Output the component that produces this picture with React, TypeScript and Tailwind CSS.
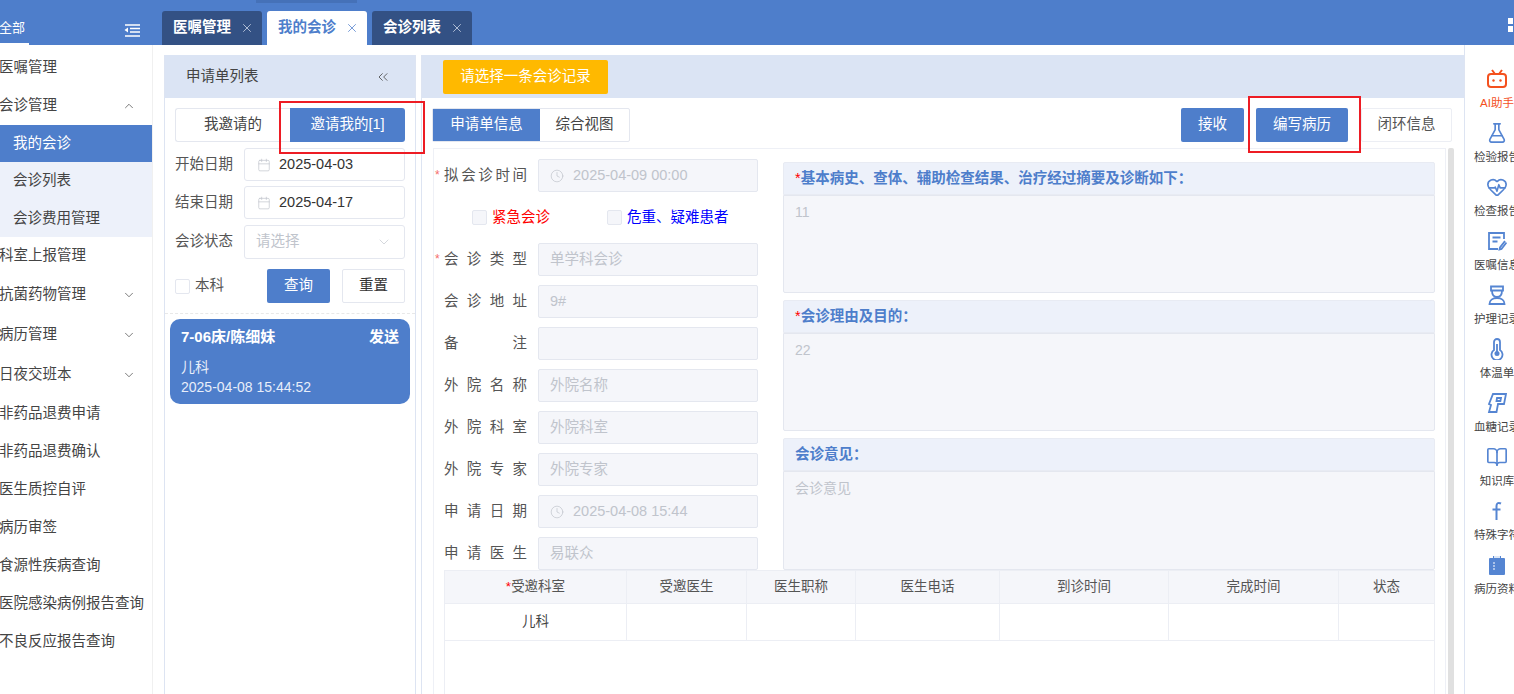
import { Calendar, ChevronDown, ChevronUp, ChevronsLeft, Clock, X, FlaskConical, HeartPulse, BookOpen } from 'lucide-react';
import type { ReactNode } from 'react';

const font = { fontFamily: '"Liberation Sans", "Noto Sans CJK SC", sans-serif' };

const navItems = [
  { label: '医嘱管理', h: 'h-[38px]' },
  { label: '会诊管理', h: 'h-[38px]', open: true },
];
const navRest = [
  { label: '科室上报管理', h: 'h-[38px]' },
  { label: '抗菌药物管理', h: 'h-[40px]', arrow: true },
  { label: '病历管理', h: 'h-[40px]', arrow: true },
  { label: '日夜交班本', h: 'h-[40px]', arrow: true },
  { label: '非药品退费申请', h: 'h-[38px]' },
  { label: '非药品退费确认', h: 'h-[38px]' },
  { label: '医生质控自评', h: 'h-[38px]' },
  { label: '病历审签', h: 'h-[38px]' },
  { label: '食源性疾病查询', h: 'h-[38px]' },
  { label: '医院感染病例报告查询', h: 'h-[38px]' },
  { label: '不良反应报告查询', h: 'h-[38px]' },
];

function TvIcon() {
  return (
    <svg width="22" height="20" viewBox="0 0 22 20" fill="none" stroke="#f4511e" strokeWidth="2">
      <rect x="2" y="5" width="18" height="13" rx="3" />
      <path d="M6 1l3 4M16 1l-3 4" />
      <circle cx="7.5" cy="11.5" r="1.2" fill="#f4511e" stroke="none" />
      <circle cx="14.5" cy="11.5" r="1.2" fill="#f4511e" stroke="none" />
    </svg>
  );
}

function NoteIcon() {
  return (
    <svg width="20" height="20" viewBox="0 0 20 20" fill="none" stroke="#5585d2" strokeWidth="1.8">
      <path d="M17 8V2H2v16h9" />
      <path d="M5.5 6.5h8M5.5 10.5h5" />
      <path d="M18 10l-5 6.5-.5 2 2-.5 5-6.5" />
    </svg>
  );
}

function NurseIcon() {
  return (
    <svg width="18" height="20" viewBox="0 0 18 20" fill="none" stroke="#5585d2" strokeWidth="1.8">
      <path d="M3 1.5h12v4H3z" />
      <path d="M4 5.5c0 4 2 6.5 5 6.5s5-2.500 5-6.500" />
      <path d="M1.500 19c0-3.500 3-6 7.500-6s7.500 2.500 7.500 6z" />
    </svg>
  );
}

function ThermoIcon() {
  return (
    <svg width="16" height="22" viewBox="0 0 16 22" fill="none" stroke="#5585d2" strokeWidth="1.8">
      <path d="M5 12V4a3 3 0 0 1 6 0v8a5.500 5.500 0 1 1-6 0z" />
      <circle cx="8" cy="15.500" r="2.500" fill="#5585d2" stroke="none" />
      <path d="M8 6v8" />
    </svg>
  );
}

function SugarIcon() {
  return (
    <svg width="20" height="22" viewBox="0 0 20 22" fill="none" stroke="#5585d2" strokeWidth="1.8">
      <path d="M6 2h13l-2 10h-6l-1.500 8H2l2-7-2-1z" />
      <path d="M10 6h4l-.6 3H9.500z" />
    </svg>
  );
}

function FontIcon() {
  return (
    <svg width="12" height="20" viewBox="0 0 12 20" fill="none" stroke="#5585d2" strokeWidth="2">
      <path d="M10 2.500C7 1 5.500 2.500 5.500 5v14" />
      <path d="M1.500 8.500h8" />
    </svg>
  );
}

function ClipIcon() {
  return (
    <svg width="18" height="22" viewBox="0 0 18 22">
      <path d="M5 2h8v2h3a1 1 0 0 1 1 1v15a1 1 0 0 1-1 1H2a1 1 0 0 1-1-1V5a1 1 0 0 1 1-1h3z" fill="#5585d2" />
      <path d="M6 1h6v3H6z" fill="#fff" opacity="0.8" />
      <path d="M5 9h2M5 12h2M5 15h2" stroke="#fff" strokeWidth="1.200" />
    </svg>
  );
}

const railItems: { icon: ReactNode; label: string; active?: boolean }[] = [
  { icon: <TvIcon />, label: 'AI助手', active: true },
  { icon: <FlaskConical size={22} strokeWidth={1.8} color="#5585d2" />, label: '检验报告' },
  { icon: <HeartPulse size={22} strokeWidth={1.8} color="#5585d2" />, label: '检查报告' },
  { icon: <NoteIcon />, label: '医嘱信息' },
  { icon: <NurseIcon />, label: '护理记录' },
  { icon: <ThermoIcon />, label: '体温单' },
  { icon: <SugarIcon />, label: '血糖记录' },
  { icon: <BookOpen size={22} strokeWidth={1.8} color="#5585d2" />, label: '知识库' },
  { icon: <FontIcon />, label: '特殊字符' },
  { icon: <ClipIcon />, label: '病历资料' },
];

function Tab({ label, active }: { label: string; active?: boolean }) {
  return (
    <div
      className={`flex h-[34px] w-[100px] items-center rounded-t-[3px] pl-[11px] text-[14.5px] font-bold ${
        active ? 'bg-white text-[#4e7ecb]' : 'bg-[#335184] text-white'
      }`}
    >
      <span className="w-[60px] whitespace-nowrap">{label}</span>
      <X size={14} strokeWidth={1.3} className={`ml-[7px] ${active ? 'text-[#4e7ecb]' : 'text-[#d5deee]'}`} />
    </div>
  );
}

function DateField({ label, value, mt }: { label: string; value: string; mt: string }) {
  return (
    <div className={`flex items-center ${mt}`}>
      <span className="w-[69px] text-[14.500px] text-[#555]">{label}</span>
      <div className="flex h-[33px] w-[161px] items-center rounded-[3px] border border-[#e4e7ef] pl-[12px] text-[14.500px] text-[#333]">
        <Calendar size={14} strokeWidth={1.2} className="mr-[8px] text-[#c0c4cc]" />
        {value}
      </div>
    </div>
  );
}

function Spaced({ text, width }: { text: string; width: string }) {
  return (
    <span className={`flex justify-between ${width}`}>
      {text.split('').map((c, i) => (
        <span key={i}>{c}</span>
      ))}
    </span>
  );
}

function FormRow({ label, value, star, icon }: { label: string; value?: string; star?: boolean; icon?: boolean }) {
  return (
    <div className="flex h-[33px] items-center">
      <div className="relative flex w-[94px] justify-end pr-[11px] text-[14.500px] text-[#555]">
        {star && <span className="absolute left-[-9px] top-[1px] text-[12px] text-[#f56c6c]">*</span>}
        <Spaced text={label} width="w-[83px]" />
      </div>
      <FieldBox value={value} icon={icon} />
    </div>
  );
}

function FieldBox({ value, icon }: { value?: string; icon?: boolean }) {
  return (
    <div className="flex h-[33px] w-[220px] items-center rounded-[2px] border border-[#e4e7ef] bg-[#f5f6fa] pl-[11px] text-[14.500px] text-[#c0c4cc]">
      {icon && <Clock size={14} strokeWidth={1.2} className="mr-[9px]" />}
      {value}
    </div>
  );
}

function Section({ title, value, star, h }: { title: string; value: string; star?: boolean; h: string }) {
  return (
    <div>
      <div className="flex h-[33px] items-center rounded-t-[2px] border border-[#e8ebf3] bg-[#edf1fa] pl-[11px] text-[14.500px] font-bold text-[#4e7ecb]">
        {star && <span className="font-normal text-[#f00]">*</span>}
        {title}
      </div>
      <div className={`${h} rounded-b-[2px] border border-[#e4e7ef] bg-[#f5f6fa] px-[11px] pt-[6px] text-[14px] text-[#c0c4cc]`}>{value}</div>
    </div>
  );
}

const columns = ['w-[182px]', 'w-[120px]', 'w-[109px]', 'w-[144px]', 'w-[169px]', 'w-[170px]', 'flex-1'];
const headers = ['受邀科室', '受邀医生', '医生职称', '医生电话', '到诊时间', '完成时间', '状态'];

export default function App() {
  return (
    <div className="relative flex h-[694px] w-[1514px] flex-col overflow-hidden bg-white" style={font}>
      {/* top bar */}
      <header className="relative h-[45px] shrink-0 bg-[#4e7ecb]">
        <div className="ml-[256px] h-[3px] w-[101px] bg-[#4571b8]" />
        <div className="flex h-[42px] items-end">
          <div className="flex h-[42px] w-[162px] items-end justify-between">
            <div className="h-[29px] w-[29px] border-b-2 border-white text-[13px] leading-[24px] whitespace-nowrap text-white">
              <span className="-ml-px">全部</span>
            </div>
            <svg width="16" height="13" viewBox="0 0 16 13" fill="none" stroke="#fff" strokeWidth="1.500" className="mr-[22px] mb-[8px]">
              <path d="M1 1h15M6 4.500h10M6 8h10M1 12h15" />
              <path d="M4 3.500v5L.5 6z" fill="#fff" stroke="none" />
            </svg>
          </div>
          <div className="flex gap-[5px]">
            <Tab label="医嘱管理" />
            <Tab label="我的会诊" active />
            <Tab label="会诊列表" />
          </div>
        </div>
        <div className="absolute left-[1508px] top-[18px] grid w-[12px] grid-cols-2 gap-[2px]">
          <span className="h-[6px] bg-white" />
          <span className="h-[6px] bg-white" />
          <span className="h-[6px] bg-white" />
          <span className="h-[6px] bg-white" />
        </div>
      </header>

      <div className="flex min-h-0 flex-1">
        {/* sidebar */}
        <aside className="w-[153px] shrink-0 border-r border-[#f0f0f0] pt-[4px] text-[14.500px] text-[#444]">
          {navItems.map((n) => (
            <div key={n.label} className={`flex ${n.h} items-center justify-between whitespace-nowrap pr-[16px]`}>
              <span className="-ml-px">{n.label}</span>
              {n.open && <ChevronUp size={14} strokeWidth={1.2} />}
            </div>
          ))}
          <div className="flex h-[37px] items-center bg-[#4e7ecb] pl-[13px] text-white">我的会诊</div>
          <div className="bg-[#edf1fa]">
            <div className="flex h-[38px] items-center pl-[13px]">会诊列表</div>
            <div className="flex h-[37px] items-center pl-[13px]">会诊费用管理</div>
          </div>
          {navRest.map((n) => (
            <div key={n.label} className={`flex ${n.h} items-center justify-between whitespace-nowrap pr-[16px]`}>
              <span className="-ml-px">{n.label}</span>
              {n.arrow && <ChevronDown size={14} strokeWidth={1.2} />}
            </div>
          ))}
        </aside>

        {/* request list */}
        <section className="ml-[11px] mt-[10px] w-[252px] shrink-0 border-x border-[#dde4f2]">
          <div className="flex h-[43px] items-center justify-between bg-[#dbe4f4] pl-[21px] pr-[24px] text-[14.500px] text-[#444]">
            申请单列表
            <ChevronsLeft size={16} strokeWidth={1.2} />
          </div>
          <div className="px-[10px] pt-[10px]">
            <div className="flex h-[34px] text-[14.500px]">
              <div className="flex w-[115px] items-center justify-center rounded-l-[3px] border border-r-0 border-[#e4e7ef] text-[#444]">我邀请的</div>
              <div className="flex w-[115px] items-center justify-center rounded-r-[3px] bg-[#4e7ecb] text-white">邀请我的[1]</div>
            </div>
            <DateField label="开始日期" value="2025-04-03" mt="mt-[6px]" />
            <DateField label="结束日期" value="2025-04-17" mt="mt-[5px]" />
            <div className="mt-[6px] flex items-center">
              <span className="w-[69px] text-[14.500px] text-[#555]">会诊状态</span>
              <div className="flex h-[34px] w-[161px] items-center justify-between rounded-[3px] border border-[#e4e7ef] pl-[11px] pr-[12px] text-[14.500px] text-[#c0c4cc]">
                请选择
                <ChevronDown size={16} strokeWidth={1} />
              </div>
            </div>
            <div className="mt-[10px] flex h-[34px] items-center text-[14.500px]">
              <span className="h-[15px] w-[15px] rounded-[2px] border border-[#e4e7ef]" />
              <span className="ml-[5px] w-[72px] text-[#555]">本科</span>
              <div className="flex h-[34px] w-[63px] items-center justify-center rounded-[2px] bg-[#4e7ecb] text-white">查询</div>
              <div className="ml-[12px] flex h-[34px] w-[63px] items-center justify-center rounded-[2px] border border-[#e4e7ef] text-[#333]">重置</div>
            </div>
          </div>
          <div className="mt-[10px] border-t border-dashed border-[#e8e8e8] px-[5px] pt-[5px]">
            <div className="h-[85px] w-[240px] rounded-[10px] bg-[#4e7ecb] px-[11px] pt-[7px] text-white">
              <div className="flex justify-between text-[15px] font-bold">
                <span>7-06床/陈细妹</span>
                <span>发送</span>
              </div>
              <div className="mt-[8px] text-[14px] leading-[20px] text-[#e8eefa]">儿科</div>
              <div className="text-[14px] leading-[20px] text-[#e8eefa]">2025-04-08 15:44:52</div>
            </div>
          </div>
        </section>

        {/* main panel */}
        <main className="ml-[5px] mt-[10px] flex w-[1043px] shrink-0 flex-col border-l border-[#dde4f2]">
          <div className="flex h-[43px] shrink-0 items-center bg-[#dbe4f4] pl-[21px]">
            <div className="flex h-[34px] w-[165px] items-center justify-center rounded-[2px] bg-[#ffb900] text-[14.500px] text-white">请选择一条会诊记录</div>
          </div>
          <div className="flex items-start pl-[10px] pt-[10px] text-[14.500px]">
            <div className="flex h-[34px] w-[198px] rounded-[2px] border border-[#e4e7ef]">
              <div className="flex w-[107px] items-center justify-center bg-[#4e7ecb] text-white">申请单信息</div>
              <div className="flex flex-1 items-center justify-center text-[#444]">综合视图</div>
            </div>
            <div className="ml-[551px] flex h-[34px] w-[63px] items-center justify-center rounded-[2px] bg-[#4e7ecb] text-white">接收</div>
            <div className="ml-[12px] flex h-[34px] w-[92px] items-center justify-center rounded-[2px] bg-[#4e7ecb] text-white">编写病历</div>
            <div className="ml-[13px] flex h-[34px] w-[91px] items-center justify-center rounded-[2px] border border-[#eceef4] text-[#555]">闭环信息</div>
          </div>

          <div className="mt-[6px] flex min-h-0 flex-1 pl-[11px]">
            <div className="w-[1013px] overflow-hidden border border-b-0 border-[#eef0f6] pl-[10px] pr-[10px] pt-[10px]">
              <div className="flex h-[411px]">
                <div className="w-[314px] pt-0">
                  <FormRow label="拟会诊时间" value="2025-04-09 00:00" star icon />
                  <div className="flex h-[51px] items-center pl-[28px] text-[14.500px]">
                    <span className="mr-[5px] h-[15px] w-[15px] rounded-[2px] border border-[#e4e7ef] bg-[#f5f6fa]" />
                    <span className="w-[115px] text-[#f00]">紧急会诊</span>
                    <span className="mr-[5px] h-[15px] w-[15px] rounded-[2px] border border-[#e4e7ef] bg-[#f5f6fa]" />
                    <span className="whitespace-nowrap text-[#00f]">危重、疑难患者</span>
                  </div>
                  <div className="flex flex-col gap-[9px]">
                    <FormRow label="会诊类型" value="单学科会诊" star />
                    <FormRow label="会诊地址" value="9#" />
                    <FormRow label="备注" />
                    <FormRow label="外院名称" value="外院名称" />
                    <FormRow label="外院科室" value="外院科室" />
                    <FormRow label="外院专家" value="外院专家" />
                    <FormRow label="申请日期" value="2025-04-08 15:44" icon />
                    <FormRow label="申请医生" value="易联众" />
                  </div>
                </div>
                <div className="ml-[25px] flex w-[652px] flex-col gap-[7px] pt-[3px]">
                  <Section title="基本病史、查体、辅助检查结果、治疗经过摘要及诊断如下：" value="11" star h="h-[98px]" />
                  <Section title="会诊理由及目的：" value="22" star h="h-[98px]" />
                  <Section title="会诊意见：" value="会诊意见" h="h-[99px]" />
                </div>
              </div>
              <div className="ml-0 w-[991px] border border-[#eceef4] text-[13.500px] text-[#555]">
                <div className="flex h-[32px] bg-[#f5f6fa]">
                  {headers.map((h, i) => (
                    <div key={h} className={`flex ${columns[i]} items-center justify-center border-r border-[#eceef4] last:border-r-0`}>
                      {i === 0 && <span className="text-[#f00]">*</span>}
                      {h}
                    </div>
                  ))}
                </div>
                <div className="flex h-[38px] border-y border-[#eceef4]">
                  {columns.map((c, i) => (
                    <div key={c} className={`flex ${c} items-center justify-center border-r border-[#eceef4] text-[#444] last:border-r-0`}>
                      {i === 0 ? '儿科' : ''}
                    </div>
                  ))}
                </div>
                <div className="h-[60px]" />
              </div>
            </div>
            <div className="ml-[2px] w-[6px] shrink-0 rounded-t-[2px] bg-[#e0e0e0]" />
          </div>
        </main>

        {/* right rail */}
        <nav className="w-[50px] shrink-0 overflow-hidden border-l border-[#dde4f2] pt-[20px]">
          {railItems.map((r) => (
            <div key={r.label} className="flex h-[54px] w-[64px] flex-col items-center">
              <div className="flex h-[27px] w-[60px] items-center justify-center">{r.icon}</div>
              <span className={`mt-[3px] whitespace-nowrap text-[11.500px] leading-[16px] ${r.active ? 'text-[#f4511e]' : 'text-[#444]'}`}>{r.label}</span>
            </div>
          ))}
        </nav>
      </div>

      {/* annotation boxes drawn over the screenshot */}
      <div className="absolute left-[279px] top-[101px] h-[53px] w-[146px] border-2 border-[#ed1c24]" />
      <div className="absolute left-[1248px] top-[96px] h-[57px] w-[113px] border-2 border-[#ed1c24]" />
    </div>
  );
}
